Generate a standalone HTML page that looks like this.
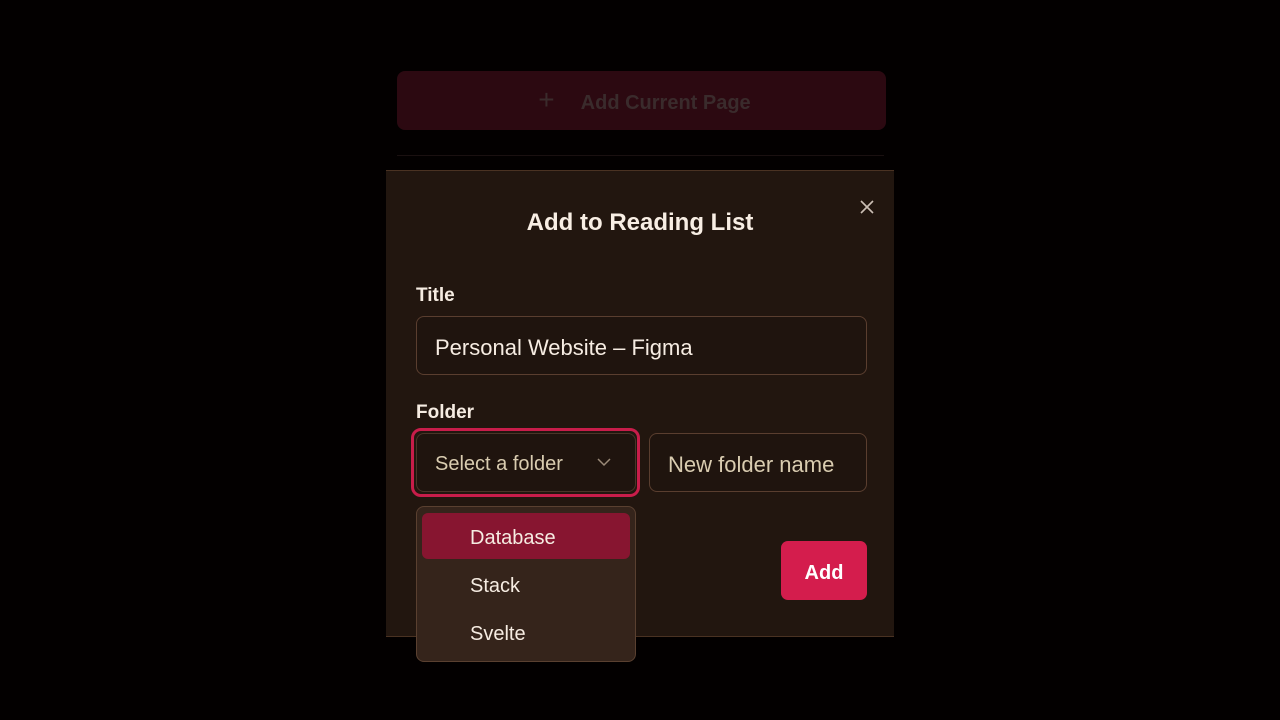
<!DOCTYPE html>
<html><head><style>
*{box-sizing:border-box;margin:0;padding:0}
body{width:1280px;height:720px;background:#030000;font-family:"Liberation Sans",sans-serif;position:relative;overflow:hidden}
.a{position:absolute}
.btn1{left:397px;top:71px;width:489px;height:59px;background:#2c0911;border-radius:8px;color:#3a2b2c;font-size:20px;font-weight:bold;display:flex;align-items:center;justify-content:center;padding-top:5px;padding-left:6px}
.modal{left:386px;top:170px;width:508px;height:467px;background:#22160f;border-top:1px solid #4a3222;border-bottom:1px solid #4a3222}
.lbl{color:#f6ece2;font-weight:bold;font-size:19px}
.inp{border:1px solid #5a3e2f;border-radius:8px;background:#1f140e;color:#d9ccb0;font-size:22px;display:flex;align-items:center;padding-left:18px;padding-top:4px}
</style></head><body>
<div class="a btn1"><span style="font-weight:normal;font-size:28px;margin-right:26px;margin-top:-6px">+</span>Add Current Page</div>
<div class="a" style="left:397px;top:155px;width:487px;height:1px;background:#1a1010"></div>
<div class="a modal"></div>
<div class="a" style="left:386px;top:209px;width:508px;text-align:center;color:#f8eee4;font-size:24px;font-weight:bold">Add to Reading List</div>
<svg class="a" style="left:859px;top:199px" width="16" height="16" viewBox="0 0 16 16"><path d="M2 2L14 14M14 2L2 14" stroke="#cbbfb5" stroke-width="1.6"/></svg>
<div class="a lbl" style="left:416px;top:285px">Title</div>
<div class="a inp" style="left:416px;top:316px;width:451px;height:59px;color:#f6ece2">Personal Website – Figma</div>
<div class="a lbl" style="left:416px;top:402px">Folder</div>
<div class="a" style="left:411px;top:428px;width:229px;height:69px;border:3px solid #c81d4a;border-radius:10px"></div>
<div class="a inp" style="left:416px;top:433px;width:220px;height:59px;font-size:20px;border-color:#4a3528">Select a folder</div>
<svg class="a" style="left:597px;top:458px" width="14" height="9" viewBox="0 0 14 9"><path d="M1 1L7 7L13 1" stroke="#9a8a78" stroke-width="1.5" fill="none"/></svg>
<div class="a inp" style="left:649px;top:433px;width:218px;height:59px">New folder name</div>
<div class="a" style="left:416px;top:506px;width:220px;height:156px;background:#35241b;border:1px solid #5a4030;border-radius:8px"></div>
<div class="a" style="left:422px;top:513px;width:208px;height:46px;background:#871530;border-radius:6px"></div>
<div class="a" style="left:470px;top:527px;color:#f6ece2;font-size:20px">Database</div>
<div class="a" style="left:470px;top:575px;color:#f6ece2;font-size:20px">Stack</div>
<div class="a" style="left:470px;top:623px;color:#f6ece2;font-size:20px">Svelte</div>
<div class="a" style="left:781px;top:541px;width:86px;height:59px;background:#d41d4d;border-radius:7px;color:#fff;font-weight:bold;font-size:20px;display:flex;align-items:center;justify-content:center;padding-top:5px">Add</div>
</body></html>
